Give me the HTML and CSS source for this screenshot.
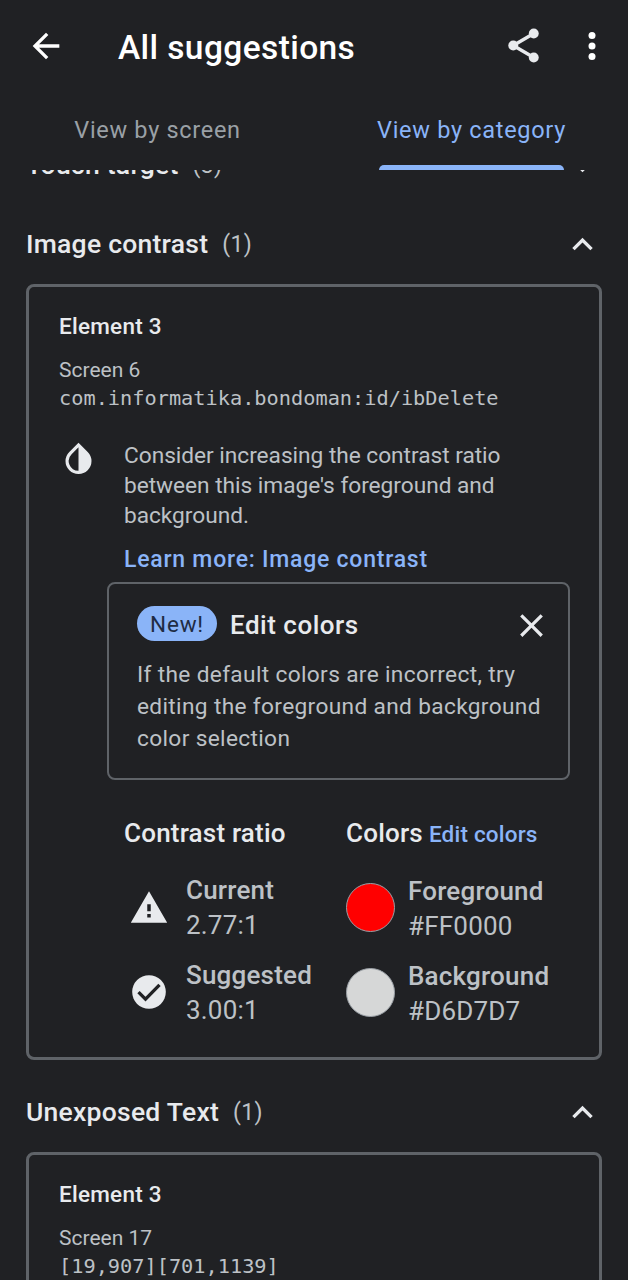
FILE: index.html
```html
<!DOCTYPE html>
<html lang="en">
<head>
<meta charset="utf-8">
<title>All suggestions</title>
<link rel="stylesheet" href="styles.css">
</head>
<body>
<div class="app">
  <header class="toolbar">
    <svg class="icon back" viewBox="0 0 24 24"><path d="M20 11H7.83l5.59-5.59L12 4l-8 8 8 8 1.41-1.41L7.83 13H20z"/></svg>
    <h1 class="title">All suggestions</h1>
    <svg class="icon share" viewBox="0 0 24 24"><path d="M6 12 18 5M6 12l12 7" fill="none" stroke="currentColor" stroke-width="2"/><circle cx="18" cy="5" r="2.9"/><circle cx="6" cy="12" r="2.9"/><circle cx="18" cy="19" r="2.9"/></svg>
    <svg class="icon more" viewBox="0 0 24 24"><circle cx="12" cy="6" r="2"/><circle cx="12" cy="12" r="2"/><circle cx="12" cy="18" r="2"/></svg>
  </header>
  <nav class="tabs">
    <div class="tab">View by screen</div>
    <div class="tab active">View by category</div>
  </nav>
  <main class="list">
    <div class="section first">
      <h2>Touch target</h2><span class="count">(3)</span>
      <svg class="icon chev" viewBox="0 0 24 24"><path d="M7.41 8.59 12 13.17l4.59-4.58L18 10l-6 6-6-6z"/></svg>
    </div>
    <div class="section">
      <h2>Image contrast</h2><span class="count">(1)</span>
      <svg class="icon chev" viewBox="0 0 24 24"><path d="M12 8l-6 6 1.41 1.41L12 10.83l4.59 4.58L18 14z"/></svg>
    </div>
    <article class="card">
      <h3>Element 3</h3>
      <p class="screen">Screen 6</p>
      <p class="res">com.informatika.bondoman:id/ibDelete</p>
      <div class="advice">
        <svg class="icon drop" viewBox="0 0 24 24"><path fill-rule="evenodd" d="M17.66 7.93 12 2.27 6.34 7.93a8 8 0 1 0 11.32 0zM12 19.59a5.99 5.99 0 0 1-4.24-10.24L12 5.1z"/></svg>
        <div class="advice-text">
          <p class="desc">Consider increasing the contrast ratio<br>between this image's foreground and<br>background.</p>
          <a class="learn">Learn more: Image contrast</a>
        </div>
      </div>
      <section class="promo">
        <div class="promo-head">
          <span class="badge">New!</span>
          <h4>Edit colors</h4>
          <svg class="icon close" viewBox="0 0 24 24"><path d="M19 6.41 17.59 5 12 10.59 6.41 5 5 6.41 10.59 12 5 17.59 6.41 19 12 13.41 17.59 19 19 17.59 13.41 12z"/></svg>
        </div>
        <p>If the default colors are incorrect, try<br>editing the foreground and background<br>color selection</p>
      </section>
      <div class="details">
        <div class="col">
          <div class="col-head">Contrast ratio</div>
          <div class="entry">
            <svg class="icon status" viewBox="0 0 24 24"><path fill-rule="evenodd" d="M1.6 21h20.8L12 3zM13 18h-2v-2h2zM13 14.4h-2v-4h2z"/></svg>
            <div class="value"><b>Current</b><span>2.77:1</span></div>
          </div>
          <div class="entry">
            <svg class="icon status" viewBox="0 0 24 24"><circle cx="12" cy="12" r="9.6"/><path class="tick" d="m6 12.1 4 4 8-8.2"/></svg>
            <div class="value"><b>Suggested</b><span>3.00:1</span></div>
          </div>
        </div>
        <div class="col">
          <div class="col-head">Colors<a class="edit">Edit colors</a></div>
          <div class="entry">
            <i class="swatch red"></i>
            <div class="value"><b>Foreground</b><span>#FF0000</span></div>
          </div>
          <div class="entry">
            <i class="swatch grey"></i>
            <div class="value"><b>Background</b><span>#D6D7D7</span></div>
          </div>
        </div>
      </div>
    </article>
    <div class="section">
      <h2>Unexposed Text</h2><span class="count">(1)</span>
      <svg class="icon chev" viewBox="0 0 24 24"><path d="M12 8l-6 6 1.41 1.41L12 10.83l4.59 4.58L18 14z"/></svg>
    </div>
    <article class="card">
      <h3>Element 3</h3>
      <p class="screen">Screen 17</p>
      <p class="res">[19,907][701,1139]</p>
    </article>
  </main>
</div>
</body>
</html>
```
FILE: styles.css
```css
* { box-sizing: border-box; margin: 0; padding: 0; }
body { background: #202124; }
.app {
  width: 628px; height: 1280px; overflow: hidden;
  display: flex; flex-direction: column;
  background: #202124; color: #e8eaed;
  font-family: Roboto, "Liberation Sans", sans-serif;
}
h1, h2, h3, h4 { font-weight: 500; white-space: nowrap; }
.icon { width: 42px; height: 42px; flex: none; fill: currentColor; display: block; }

.toolbar { height: 92px; flex: none; display: flex; align-items: center; padding: 0 15px 0 26px; color: #fff; }
.back { width: 40px; height: 40px; }
.title { margin-left: 52px; flex: 1; font-size: 33.5px; line-height: 40px; padding-top: 3px; letter-spacing: 0.4px; }
.share { color: #e8eaed; margin-right: 27px; margin-top: -2px; width: 41px; height: 41px; }

.tabs { height: 78px; flex: none; display: grid; grid-template-columns: 1fr 1fr; }
.tab {
  display: flex; flex-direction: column; align-items: center; justify-content: space-between;
  padding-top: 24px; font-size: 23.5px; line-height: 28px; letter-spacing: 0.7px; color: #9aa0a6; white-space: nowrap;
  text-indent: 1px;
}
.tab.active { color: #8ab4f8; }
.tab.active::after { content: ""; width: 185px; height: 5px; border-radius: 5px 5px 0 0; background: #8ab4f8; }

.list { flex: 1; min-height: 0; overflow: hidden; padding: 0 26px; }
.section { height: 79px; display: flex; align-items: center; }
.section.first { margin-top: -44px; }
.section h2 { font-size: 26.5px; line-height: 32px; letter-spacing: 0.25px; margin-top: -1px; }
.count { font-size: 23px; line-height: 32px; color: #bdc1c6; margin-left: 14px; padding-top: 1px; letter-spacing: 0.3px; }
.chev { margin-left: auto; margin-right: -1px; width: 41px; height: 41px; }

.card { border: 3px solid #5f6368; border-radius: 8px; padding: 25px 29px 0 30px; margin-bottom: 13px; height: 776px; }
.card h3 { font-size: 22.5px; line-height: 28px; letter-spacing: 0.25px; }
.screen { margin-top: 17px; font-size: 21px; line-height: 26px; color: #bdc1c6; }
.res { font-family: "DejaVu Sans Mono", "Liberation Mono", monospace; font-size: 20.3px; line-height: 30px; color: #bdc1c6; white-space: nowrap; }
.advice { display: flex; margin-top: 28px; }
.drop { width: 39px; height: 39px; margin-top: -2px; }
.advice-text { margin-left: 26px; white-space: nowrap; }
.desc { font-size: 22.7px; line-height: 30px; color: #bdc1c6; letter-spacing: -0.03px; }
.learn { display: block; margin-top: 14px; font-size: 23px; line-height: 30px; font-weight: 500; color: #8ab4f8; letter-spacing: 0.76px; }

.promo { width: 463px; height: 198px; margin: 7px 0 0 48px; border: 2px solid #5f6368; border-radius: 8px; padding: 21px 17px 0 28px; color: #bdc1c6; white-space: nowrap; }
.promo-head { display: flex; align-items: center; height: 36px; }
.badge { width: 80px; height: 35px; border-radius: 18px; background: #8ab4f8; color: #202c44; display: flex; align-items: center; justify-content: center; font-size: 22.5px; letter-spacing: 0.8px; padding-top: 2px; }
.promo h4 { margin-left: 13px; font-size: 26px; color: #e8eaed; padding-top: 3px; letter-spacing: 0.5px; }
.close { margin-left: auto; width: 39px; height: 39px; color: #e8eaed; margin-top: 4px; }
.promo p { margin-top: 18px; font-size: 22.7px; line-height: 31.8px; letter-spacing: 0.34px; }

.details { display: grid; grid-template-columns: 222px 1fr; margin: 36px 0 0 65px; white-space: nowrap; }
.col-head { font-size: 26px; line-height: 34px; font-weight: 500; display: flex; align-items: baseline; letter-spacing: 0.2px; }
.edit { color: #8ab4f8; font-size: 22.5px; margin-left: 6px; }
.entry { display: flex; align-items: center; height: 71px; margin-top: 21px; font-size: 26px; line-height: 35.5px; letter-spacing: 0.2px; color: #bdc1c6; }
.entry + .entry { margin-top: 14px; }
.value { padding-top: 3px; }
.value b, .value span { display: block; font-weight: 400; }
.value b { font-weight: 500; }
.status { margin: 0 16px 0 4px; color: #e8eaed; }
.tick { fill: none; stroke: #202124; stroke-width: 1.9; }
.swatch { width: 49px; height: 49px; border-radius: 50%; border: 1.5px solid #9aa0a6; margin-right: 13px; }
.red { background: #f00; }
.grey { background: #d6d7d7; }
```
